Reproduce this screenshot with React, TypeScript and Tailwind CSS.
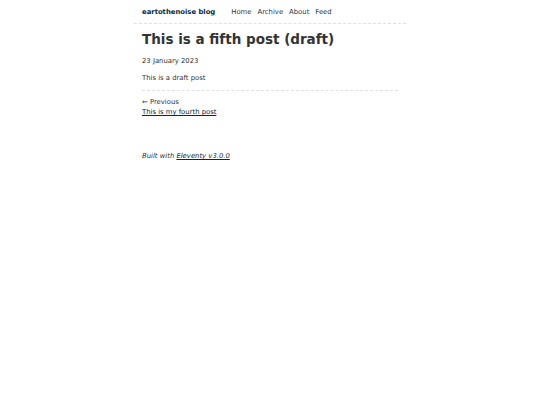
const FONT = { fontFamily: '"DejaVu Sans", sans-serif' };

export default function App() {
  return (
    <div className="min-h-screen bg-white text-[#333]" style={FONT}>
      <div className="mx-auto w-[272px] text-[6.85px]">
        {/* Header */}
        <header className="flex h-[24px] items-center gap-[16px] border-b border-dashed border-[#e0e0e0] px-[8px] pt-[1px]">
          <a className="font-bold text-[#082840] no-underline">eartothenoise blog</a>
          <nav className="flex gap-[6px] text-[#1f3448]">
            <a>Home</a>
            <a>Archive</a>
            <a>About</a>
            <a>Feed</a>
          </nav>
        </header>

        <main className="px-[8px]">
          <h1 className="mt-[7px] text-[13.5px] font-bold leading-[17px]">This is a fifth post (draft)</h1>
          <div className="mt-[8px] leading-[10px]">23 January 2023</div>
          <p className="mt-[7px] leading-[10px]">This is a draft post</p>

          <ul className="mt-[7px] border-t border-dashed border-[#e0e0e0] pt-[6px]">
            <li className="leading-[10px]">
              ← Previous
              <br />
              <a className="text-[#082840] underline">This is my fourth post</a>
            </li>
          </ul>
        </main>

        <footer className="mt-[34px] px-[8px] italic leading-[10px]">
          Built with <a className="text-[#082840] underline">Eleventy v3.0.0</a>
        </footer>
      </div>
    </div>
  );
}
